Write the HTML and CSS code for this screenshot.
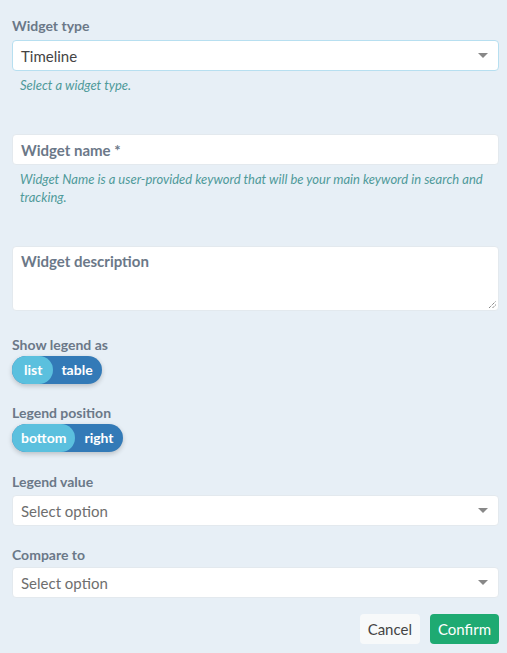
FILE: index.html
```html
<!DOCTYPE html>
<html>
<head>
<meta charset="utf-8">
<link rel="stylesheet" href="styles.css">
</head>
<body>
<form class="form">
  <div class="field">
    <label class="label">Widget type</label>
    <div class="select focused"><span class="value">Timeline</span><span class="caret"></span></div>
    <div class="help">Select a widget type.</div>
  </div>

  <div class="field gap-name">
    <div class="input"><span class="ph">Widget name *</span></div>
    <div class="help">Widget Name is a user-provided keyword that will be your main keyword in search and tracking.</div>
  </div>

  <div class="field gap-desc">
    <div class="textarea"><span class="ph">Widget description</span>
      <svg class="grip" width="9" height="9" viewBox="0 0 9 9"><path d="M1 8 L8 1 M4.5 8 L8 4.5" stroke="#555" stroke-width="1" stroke-dasharray="1 1"/></svg>
    </div>
  </div>

  <div class="field gap-toggle">
    <label class="label tl">Show legend as</label>
    <div class="toggle"><span class="opt on wide">list</span><span class="opt narrow">table</span></div>
  </div>

  <div class="field gap-toggle2">
    <label class="label tl">Legend position</label>
    <div class="toggle"><span class="opt on">bottom</span><span class="opt">right</span></div>
  </div>

  <div class="field gap-lv">
    <label class="label mid">Legend value</label>
    <div class="select"><span class="value muted">Select option</span><span class="caret"></span></div>
  </div>

  <div class="field gap-cmp">
    <label class="label tight">Compare to</label>
    <div class="select"><span class="value muted">Select option</span><span class="caret"></span></div>
  </div>

  <div class="actions">
    <button type="button" class="btn cancel">Cancel</button>
    <button type="button" class="btn confirm">Confirm</button>
  </div>
</form>
</body>
</html>
```
FILE: styles.css
```css
html, body {
  margin: 0;
  padding: 0;
  background: #e7eff6;
  font-family: Lato, "Open Sans", sans-serif;
}
.form {
  padding: 17px 8px 0 12px;
  display: flex;
  flex-direction: column;
}
.field {
  display: flex;
  flex-direction: column;
}
.label {
  font-size: 14px;
  font-weight: 700;
  color: #6b7888;
  line-height: 18px;
  margin-bottom: 5px;
}
.label.tl {
  margin-bottom: 2px;
}
.label.mid {
  margin-bottom: 4px;
}
.label.tight {
  margin-bottom: 3px;
}
.select, .input, .textarea {
  background: #fff;
  border: 1px solid #e3e9ee;
  border-radius: 4px;
  box-sizing: border-box;
  display: flex;
  align-items: center;
  position: relative;
}
.select {
  height: 31px;
  padding: 0 8px;
  justify-content: space-between;
}
.select.focused {
  border-color: #b7dff0;
}
.value {
  font-size: 15px;
  color: #444;
}
.value.muted {
  color: #6e6e6e;
}
.caret {
  width: 0;
  height: 0;
  border-left: 5px solid transparent;
  border-right: 5px solid transparent;
  border-top: 5px solid #888;
  margin-right: 2px;
}
.help {
  font-size: 13px;
  font-style: italic;
  color: #4f9a9a;
  line-height: 18px;
  margin-top: 5px;
  padding-left: 8px;
  padding-right: 4px;
}
.gap-name { margin-top: 40px; }
.input {
  height: 31px;
  padding: 0 8px;
}
.ph {
  font-size: 15px;
  font-weight: 700;
  color: #6b7888;
}
.gap-desc { margin-top: 40px; }
.textarea {
  height: 65px;
  align-items: flex-start;
  padding: 5px 8px;
}
.grip {
  position: absolute;
  right: 1px;
  bottom: 1px;
}
.gap-toggle { margin-top: 25px; }
.gap-toggle2 { margin-top: 20px; }
.gap-lv { margin-top: 21px; }
.gap-cmp { margin-top: 20px; }
.toggle {
  display: inline-flex;
  align-self: flex-start;
  background: #337ab7;
  border-radius: 15px;
  height: 28px;
  box-shadow: 0 2px 5px rgba(0,0,0,0.2);
}
.opt {
  color: #fff;
  font-size: 14px;
  font-weight: 700;
  line-height: 28px;
  padding: 0 9px;
  border-radius: 15px;
}
.opt.wide {
  padding: 0 11px 0 12px;
}
.opt.narrow {
  padding: 0 9px 0 8px;
}
.opt.on {
  background: #5bc0de;
}
.actions {
  display: flex;
  justify-content: flex-end;
  gap: 10px;
  margin-top: 16px;
}
.btn {
  font-family: inherit;
  font-size: 15px;
  height: 30px;
  border: none;
  border-radius: 4px;
  padding: 0 8px;
}
.cancel {
  background: #f7f9fa;
  color: #444;
}
.confirm {
  background: #1eaa72;
  color: #fff;
}
```
